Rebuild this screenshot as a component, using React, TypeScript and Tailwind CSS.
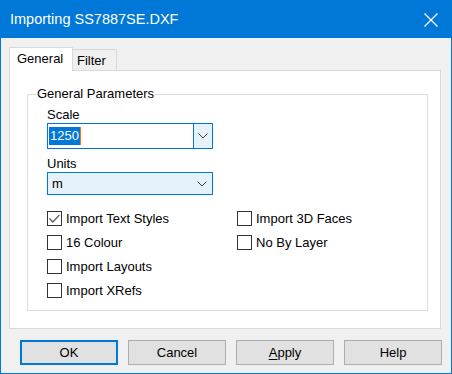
import React from 'react';

const FONT = { fontFamily: '"Liberation Sans", Arial, sans-serif' };

function Chevron() {
  return (
    <svg width="10" height="6" viewBox="0 0 10 6" className="block">
      <polyline points="0.5,0.5 5,5 9.5,0.5" fill="none" stroke="#404040" strokeWidth="1" />
    </svg>
  );
}

function Check({ label, checked }: { label: string; checked?: boolean }) {
  return (
    <div className="flex items-center h-[24px]">
      <div className="w-[15px] h-[15px] border border-[#333] bg-white flex items-center justify-center">
        {checked && (
          <svg width="11" height="9" viewBox="0 0 11 9" className="block">
            <polyline points="0.5,4.5 3.8,8 10.5,0.8" fill="none" stroke="#555" strokeWidth="1.2" />
          </svg>
        )}
      </div>
      <span className="ml-[4px] text-[13px] text-black leading-none">{label}</span>
    </div>
  );
}

function Button({ children, primary }: { children: React.ReactNode; primary?: boolean }) {
  return (
    <button
      className={`w-[98px] h-[25px] bg-[#e1e1e1] text-[13px] text-black ${
        primary ? 'border-2 border-[#0078d7]' : 'border border-[#adadad]'
      }`}
    >
      {children}
    </button>
  );
}

export default function App() {
  return (
    <div style={FONT} className="w-[452px] h-[374px] border border-[#0078d7] bg-[#f0f0f0] flex flex-col select-none">
      {/* Title bar */}
      <div className="h-[37px] bg-[#0078d7] flex items-center justify-between pl-[9px] pr-[13px] shrink-0">
        <span className="text-white text-[14.5px]">Importing SS7887SE.DXF</span>
        <svg width="14" height="14" viewBox="0 0 14 14" className="block">
          <line x1="0.5" y1="0.5" x2="13.5" y2="13.5" stroke="white" strokeWidth="1.2" />
          <line x1="13.5" y1="0.5" x2="0.5" y2="13.5" stroke="white" strokeWidth="1.2" />
        </svg>
      </div>

      {/* Tabs */}
      <div className="pt-[8px] pl-[8px] flex items-end h-[32px] shrink-0">
        <div className="relative z-10 w-[64px] h-[24px] bg-white border border-[#d9d9d9] border-b-0 mb-[-1px] pl-[7px] pt-[1px] text-[13px] text-black">
          General
        </div>
        <div className="w-[44px] h-[21px] bg-[#f0f0f0] border border-[#d9d9d9] border-l-0 border-b-0 pl-[4px] pt-[1px] text-[13px] text-black">
          Filter
        </div>
      </div>

      {/* Tab panel */}
      <div className="ml-[8px] w-[432px] h-[259px] bg-white border border-[#d9d9d9] pt-[14px] pl-[17px] shrink-0">
        <fieldset className="w-[401px] h-[226px] border border-[#dcdcdc]">
          <legend className="ml-[8px] px-[1px] text-[13px] text-black leading-[18px]">General Parameters</legend>
          <div className="pl-[19px]">
            <div className="text-[13px] text-black mt-[4px] leading-[15px]">Scale</div>
            <div className="mt-[1px] w-[166px] h-[26px] border border-[#0078d7] bg-white flex">
              <div className="flex-1 flex items-center pl-[1px]">
                <span className="bg-[#0078d7] text-white text-[13px] leading-[18px] px-[1px] border-r border-[#ff7a00]">1250</span>
              </div>
              <div className="w-[19px] border-l border-[#0078d7] bg-[#e5f1fb] flex items-center justify-center">
                <Chevron />
              </div>
            </div>
            <div className="text-[13px] text-black mt-[7px] leading-[15px]">Units</div>
            <div className="mt-[1px] w-[166px] h-[23px] border border-[#0078d7] bg-[#e5f1fb] flex items-center justify-between pl-[4px] pr-[5px]">
              <span className="text-[13px] text-black">m</span>
              <Chevron />
            </div>
            <div className="mt-[11px] flex">
              <div className="w-[190px]">
                <Check label="Import Text Styles" checked />
                <Check label="16 Colour" />
                <Check label="Import Layouts" />
                <Check label="Import XRefs" />
              </div>
              <div>
                <Check label="Import 3D Faces" />
                <Check label="No By Layer" />
              </div>
            </div>
          </div>
        </fieldset>
      </div>

      {/* Buttons */}
      <div className="mt-[11px] pl-[19px] flex gap-[10px]">
        <Button primary>OK</Button>
        <Button>Cancel</Button>
        <Button>
          <span className="underline underline-offset-2">A</span>pply
        </Button>
        <Button>Help</Button>
      </div>
    </div>
  );
}
